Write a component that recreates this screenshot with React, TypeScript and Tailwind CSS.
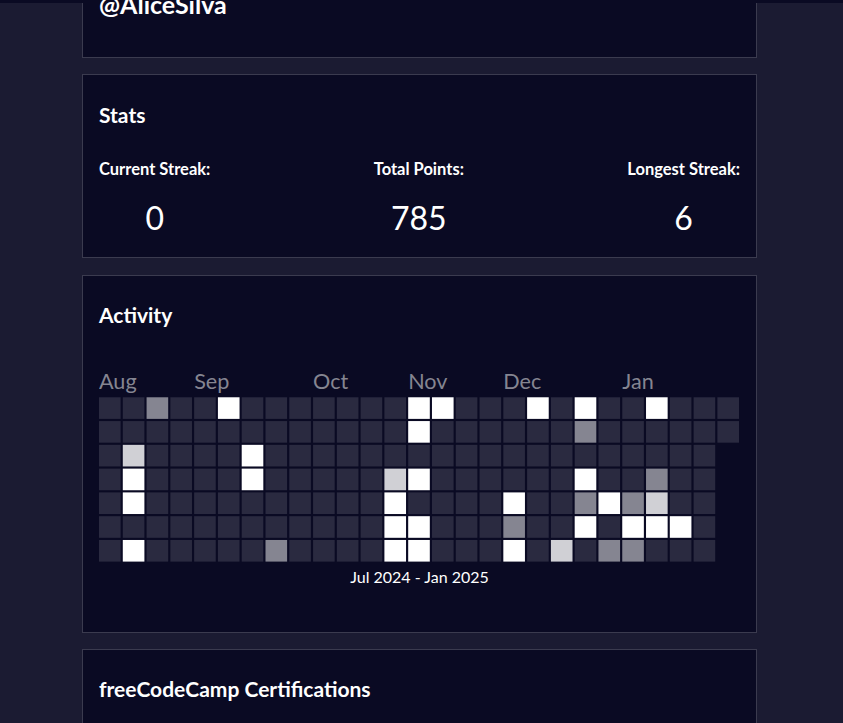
import React from 'react'

const COLORS = ['#2a2a40', '#858591', '#d0d0d5', '#ffffff']

// one string per weekday, one char per week ('.' = no day)
const ROWS = [
  '001003' + '0'.repeat(7) + '33' + '000' + '303' + '00' + '3' + '000',
  '0'.repeat(13) + '3' + '0'.repeat(6) + '1' + '0'.repeat(6),
  '0200003' + '0'.repeat(19) + '.',
  '0300003' + '00000' + '23' + '000000' + '3' + '00' + '1' + '00' + '.',
  '03' + '0'.repeat(10) + '3' + '0000' + '3' + '00' + '1312' + '00' + '.',
  '0'.repeat(12) + '33' + '000' + '1' + '00' + '3' + '0' + '333' + '0' + '.',
  '03' + '00000' + '1' + '0000' + '33' + '000' + '3' + '0' + '2' + '0' + '11' + '000' + '.',
]

const MONTHS = [
  { label: 'Aug', week: 0 },
  { label: 'Sep', week: 4 },
  { label: 'Oct', week: 9 },
  { label: 'Nov', week: 13 },
  { label: 'Dec', week: 17 },
  { label: 'Jan', week: 22 },
]

function Heatmap() {
  return (
    <svg viewBox="0 0 296 90" width={640} height={194.6} className="block">
      {MONTHS.map((m) => (
        <text key={m.label} x={m.week * 11} y={10} fontSize={10} fill="#858591" fontFamily="Lato, sans-serif">
          {m.label}
        </text>
      ))}
      {ROWS.map((row, d) =>
        row.split('').map((c, w) =>
          c === '.' ? null : (
            <rect key={`${d}-${w}`} x={w * 11} y={14 + d * 11} width={10} height={10} fill={COLORS[Number(c)]} />
          )
        )
      )}
    </svg>
  )
}

function Stat({ label, value }: { label: string; value: string }) {
  return (
    <div className="flex flex-col items-center">
      <p className="text-[16.5px] font-bold leading-[20px]">{label}</p>
      <p className="mt-[20px] text-[32px] leading-[38px]">{value}</p>
    </div>
  )
}

export default function App() {
  return (
    <div className="h-[723px] overflow-hidden bg-[#1b1b32] font-['Lato',sans-serif] text-white">
      <div className="h-[3px] bg-[#0a0a23]" />
      <div className="ml-[82px] w-[675px]">
        <section className="flex h-[55px] flex-col border-x border-b border-[#3b3b4f] bg-[#0a0a23] px-4">
          <h1 className="-mt-[14px] text-[25px] font-bold leading-[30px]">@AliceSilva</h1>
        </section>

        <section className="mt-4 h-[184px] border border-[#3b3b4f] bg-[#0a0a23] px-4 pt-[27px]">
          <h2 className="text-[21px] font-bold leading-[25px]">Stats</h2>
          <div className="mt-[32px] flex justify-between">
            <Stat label="Current Streak:" value="0" />
            <Stat label="Total Points:" value="785" />
            <Stat label="Longest Streak:" value="6" />
          </div>
        </section>

        <section className="mt-[17px] h-[358px] border border-[#3b3b4f] bg-[#0a0a23] px-4 pt-[26px]">
          <h2 className="text-[21px] font-bold leading-[25px]">Activity</h2>
          <div className="mt-[40px]">
            <Heatmap />
          </div>
          <p className="mt-[5px] text-center text-[16px] leading-[19px]">Jul 2024 - Jan 2025</p>
        </section>

        <section className="mt-4 h-[200px] border border-[#3b3b4f] bg-[#0a0a23] px-4 pt-[26px]">
          <h2 className="text-[21px] font-bold leading-[25px]">freeCodeCamp Certifications</h2>
        </section>
      </div>
    </div>
  )
}
